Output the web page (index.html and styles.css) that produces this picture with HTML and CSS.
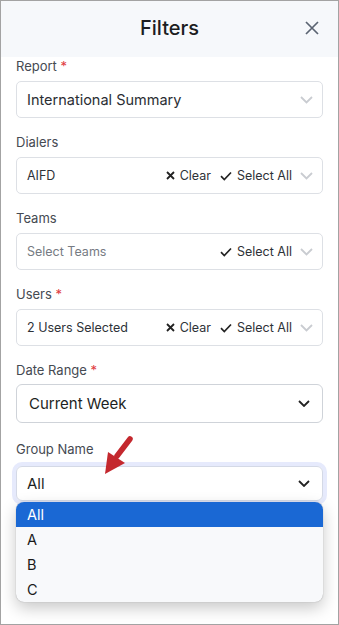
FILE: index.html
```html
<!DOCTYPE html>
<html lang="en">
<head>
    <meta charset="UTF-8">
    <meta name="viewport" content="width=device-width, initial-scale=1.0">
    <title>Filters</title>
    <link rel="stylesheet" href="styles.css">
</head>
<body>
    <div class="panel">
        <header class="panel-header">
            <h1 class="panel-title">Filters</h1>
            <button class="close-button" aria-label="Close">
                <svg width="14" height="14" viewBox="0 0 14 14"><path d="M1 1 L13 13 M13 1 L1 13" stroke="#5b6472" stroke-width="1.7" fill="none"/></svg>
            </button>
        </header>

        <div class="panel-body">
            <div class="field">
                <label class="field-label">Report <span class="req">*</span></label>
                <div class="picker picker-lg">
                    <span class="picker-value">International Summary</span>
                    <svg class="chevron-light" width="13" height="8" viewBox="0 0 13 8"><path d="M1 1 L6.5 6.5 L12 1" stroke="#c9ccd1" stroke-width="1.8" fill="none"/></svg>
                </div>
            </div>

            <div class="field">
                <label class="field-label">Dialers</label>
                <div class="picker">
                    <span class="picker-value">AIFD</span>
                    <span class="picker-action">
                        <svg width="9" height="9" viewBox="0 0 9 9"><path d="M1 1 L8 8 M8 1 L1 8" stroke="#222" stroke-width="1.8" fill="none"/></svg>
                        Clear
                    </span>
                    <span class="picker-action">
                        <svg width="12" height="10" viewBox="0 0 12 10"><path d="M1 5.2 L4.3 8.5 L11 1.5" stroke="#222" stroke-width="1.7" fill="none"/></svg>
                        Select All
                    </span>
                    <svg class="chevron-light" width="13" height="8" viewBox="0 0 13 8"><path d="M1 1 L6.5 6.5 L12 1" stroke="#c9ccd1" stroke-width="1.8" fill="none"/></svg>
                </div>
            </div>

            <div class="field">
                <label class="field-label">Teams</label>
                <div class="picker">
                    <span class="picker-value placeholder">Select Teams</span>
                    <span class="picker-action">
                        <svg width="12" height="10" viewBox="0 0 12 10"><path d="M1 5.2 L4.3 8.5 L11 1.5" stroke="#222" stroke-width="1.7" fill="none"/></svg>
                        Select All
                    </span>
                    <svg class="chevron-light" width="13" height="8" viewBox="0 0 13 8"><path d="M1 1 L6.5 6.5 L12 1" stroke="#c9ccd1" stroke-width="1.8" fill="none"/></svg>
                </div>
            </div>

            <div class="field">
                <label class="field-label">Users <span class="req">*</span></label>
                <div class="picker">
                    <span class="picker-value">2 Users Selected</span>
                    <span class="picker-action">
                        <svg width="9" height="9" viewBox="0 0 9 9"><path d="M1 1 L8 8 M8 1 L1 8" stroke="#222" stroke-width="1.8" fill="none"/></svg>
                        Clear
                    </span>
                    <span class="picker-action">
                        <svg width="12" height="10" viewBox="0 0 12 10"><path d="M1 5.2 L4.3 8.5 L11 1.5" stroke="#222" stroke-width="1.7" fill="none"/></svg>
                        Select All
                    </span>
                    <svg class="chevron-light" width="13" height="8" viewBox="0 0 13 8"><path d="M1 1 L6.5 6.5 L12 1" stroke="#c9ccd1" stroke-width="1.8" fill="none"/></svg>
                </div>
            </div>

            <div class="field">
                <label class="field-label">Date Range <span class="req">*</span></label>
                <div class="select select-date">
                    <span class="select-value">Current Week</span>
                    <svg width="12" height="7" viewBox="0 0 12 7"><path d="M1 1 L6 6 L11 1" stroke="#222" stroke-width="1.8" fill="none"/></svg>
                </div>
            </div>

            <div class="field field-group">
                <label class="field-label">Group Name</label>
                <div class="select select-focus">
                    <span class="select-value">All</span>
                    <svg width="12" height="7" viewBox="0 0 12 7"><path d="M1 1 L6 6 L11 1" stroke="#222" stroke-width="1.8" fill="none"/></svg>
                </div>
                <ul class="options">
                    <li class="option selected">All</li>
                    <li class="option">A</li>
                    <li class="option">B</li>
                    <li class="option">C</li>
                </ul>
                <svg class="pointer-arrow" width="40" height="46" viewBox="0 0 40 46">
                    <path d="M30 5 L17 22" stroke="#c4282e" stroke-width="5.5" stroke-linecap="round" fill="none"/>
                    <path d="M5 40 L8 18 L25 29 Z" fill="#c4282e"/>
                </svg>
            </div>
        </div>
    </div>
</body>
</html>
```

FILE: styles.css
```css
/* Reset */
* {
    margin: 0;
    padding: 0;
    box-sizing: border-box;
}

body {
    font-family: 'Inter', 'Liberation Sans', Arial, sans-serif;
    background-color: white;
    color: #2b2f36;
}

/* Panel */
.panel {
    width: 339px;
    height: 625px;
    border: 1px solid #a3a3a3;
    background-color: white;
    position: relative;
    overflow: hidden;
}

.panel-header {
    height: 56px;
    background-color: #f6f8fb;
    display: flex;
    align-items: center;
    justify-content: center;
    position: relative;
}

.panel-title {
    font-size: 20px;
    font-weight: 450;
    color: #1b1d21;
    margin-top: -2px;
}

.close-button {
    position: absolute;
    right: 18px;
    top: 19px;
    border: none;
    background: none;
    display: flex;
    padding: 1px;
}

.panel-body {
    padding: 0 15px;
}

/* Fields */
.field {
    margin-bottom: 15px;
}

.field-label {
    display: block;
    font-size: 13px;
    line-height: 18px;
    color: #454a52;
    margin-bottom: 6px;
}

.req {
    color: #e0393e;
}

.picker {
    height: 37px;
    border: 1px solid #dde0e5;
    border-radius: 5px;
    display: flex;
    align-items: center;
    padding: 0 9px 0 10px;
    font-size: 12.5px;
    color: #2e3238;
}

.picker-value {
    flex: 1;
}

.picker-lg .picker-value {
    font-size: 14.5px;
    color: #2a2d33;
}

.placeholder {
    color: #767b83;
}

.picker-action {
    display: flex;
    align-items: center;
    gap: 5px;
    margin-right: 9px;
    color: #2e3238;
}

.picker-action:last-of-type {
    margin-right: 7px;
}

.chevron-light {
    margin-left: 1px;
}

/* Native-like selects */
.select {
    border: 1px solid #cfd3d9;
    border-radius: 6px;
    display: flex;
    align-items: center;
    justify-content: space-between;
    padding: 0 12px 0 12px;
    font-size: 15px;
    color: #1d1f23;
}

.select-date {
    height: 39px;
    margin-top: -1px;
}

.select-focus {
    height: 35px;
    padding-left: 10px;
    border-color: #d4d9e6;
    box-shadow: 0 0 0 4px #e6eafc;
}

.field-group {
    position: relative;
    margin-top: 17px;
}

.field-group .field-label {
    margin-bottom: 8px;
}

/* Open dropdown */
.options {
    list-style: none;
    margin-top: 1px;
    background-color: #f8f9fb;
    border-radius: 8px;
    overflow: hidden;
    box-shadow: 0 0 1px #8a8a8a, 0 6px 16px rgba(0, 0, 0, 0.22);
}

.option {
    height: 25px;
    line-height: 25px;
    padding-left: 11px;
    font-size: 14.5px;
    color: #1a1a1a;
}

.option.selected {
    background-color: #1a68d4;
    color: white;
}

.pointer-arrow {
    position: absolute;
    left: 84px;
    top: -6px;
}
```
